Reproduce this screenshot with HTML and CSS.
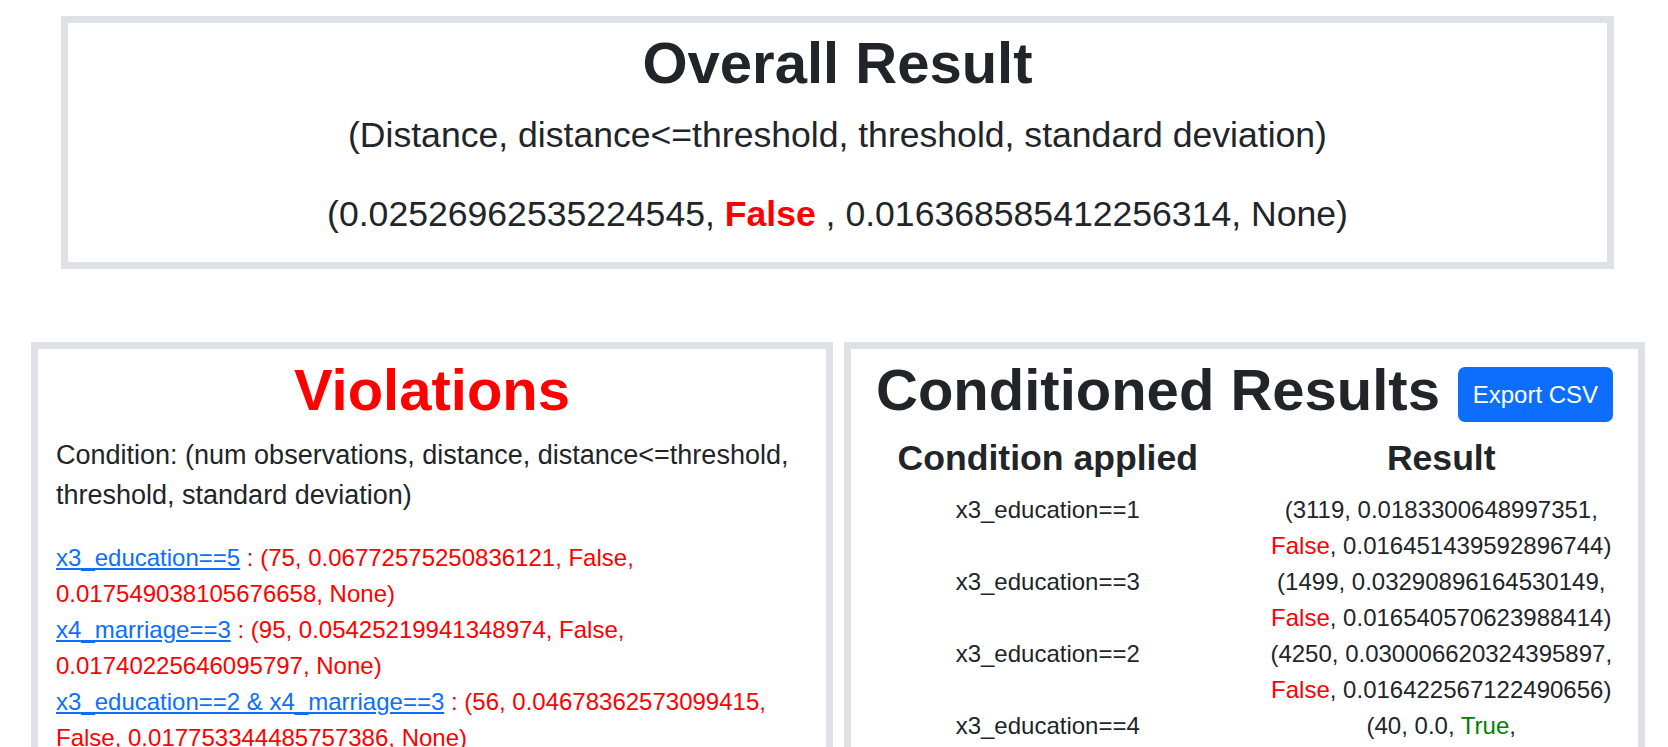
FILE: index.html
```html
<!DOCTYPE html>
<html lang="en">
<head>
<meta charset="utf-8">
<title>Results</title>
<link rel="stylesheet" href="styles.css">
</head>
<body>
<div class="page">
  <section class="overall">
    <h1 class="title">Overall Result</h1>
    <p class="legend">(Distance, distance&lt;=threshold, threshold, standard deviation)</p>
    <p class="values">(0.02526962535224545, <b class="bad">False</b> , 0.016368585412256314, None)</p>
  </section>

  <div class="panels">
    <section class="panel violations">
      <h2 class="title red">Violations</h2>
      <p class="cond">Condition: (num observations, distance, distance&lt;=threshold, threshold, standard deviation)</p>
      <div class="entries">
        <div class="entry"><a href="#">x3_education==5</a> : (75, 0.06772575250836121, False, 0.017549038105676658, None)</div>
        <div class="entry"><a href="#">x4_marriage==3</a> : (95, 0.05425219941348974, False, 0.01740225646095797, None)</div>
        <div class="entry"><a href="#">x3_education==2 &amp; x4_marriage==3</a> : (56, 0.04678362573099415, False, 0.017753344485757386, None)</div>
        <div class="entry"><a href="#">x3_education==5 &amp; x4_marriage==2</a> : (41, 0.07211538461538461, False, 0.01821490544315267, None)</div>
      </div>
    </section>

    <section class="panel conditioned">
      <div class="head-row">
        <h2 class="title">Conditioned Results</h2>
        <button class="btn" type="button">Export CSV</button>
      </div>
      <div class="grid">
        <div class="th">Condition applied</div>
        <div class="th">Result</div>

        <div class="td">x3_education==1</div>
        <div class="td">(3119, 0.0183300648997351, <span class="f">False</span>, 0.016451439592896744)</div>

        <div class="td">x3_education==3</div>
        <div class="td">(1499, 0.03290896164530149, <span class="f">False</span>, 0.016540570623988414)</div>

        <div class="td">x3_education==2</div>
        <div class="td">(4250, 0.030006620324395897, <span class="f">False</span>, 0.016422567122490656)</div>

        <div class="td">x3_education==4</div>
        <div class="td">(40, 0.0, <span class="t">True</span>, 0.0171432467185839)</div>

        <div class="td">x3_education==5</div>
        <div class="td">(75, 0.06772575250836121, <span class="f">False</span>, 0.017549038105676658)</div>
      </div>
    </section>
  </div>
</div>
</body>
</html>
```

FILE: styles.css
```css
html, body {
  margin: 0;
  padding: 0;
  background: #ffffff;
}

body {
  font-family: "Liberation Sans", Arial, sans-serif;
  color: #212529;
  font-size: 24px;
  line-height: 36px;
}

.page {
  padding-top: 16px;
  width: 1668px;
}

.overall {
  box-sizing: border-box;
  width: 1553px;
  margin-left: 61px;
  border: 7px solid #dee2e6;
  padding: 5px 0 26px;
  text-align: center;
}

.title {
  margin: 0;
  font-size: 58px;
  line-height: 70px;
  font-weight: 700;
}

.red {
  color: #ff0000;
}

.legend,
.values {
  margin: 0;
  font-size: 35.6px;
  line-height: 43px;
  font-weight: 400;
}

.legend {
  margin-top: 16px;
}

.values {
  margin-top: 36px;
}

.bad {
  color: #ff0000;
  font-weight: 700;
}

.panels {
  display: flex;
  gap: 11px;
  margin-top: 73px;
  padding-left: 31px;
}

.panel {
  box-sizing: border-box;
  border: 7px solid #dee2e6;
  padding-top: 6px;
}

.violations {
  width: 802px;
  padding-left: 18px;
  padding-right: 18px;
}

.violations .title {
  text-align: center;
}

.cond {
  margin: 10px 0 25px;
  font-size: 27px;
  line-height: 40px;
}

.entry {
  color: #ff0000;
}

.entry a {
  color: #0d6efd;
  text-decoration: underline;
}

.conditioned {
  width: 801px;
}

.head-row {
  display: flex;
  justify-content: center;
  align-items: center;
  gap: 18px;
}

.btn {
  box-sizing: border-box;
  width: 155px;
  height: 55px;
  margin-top: 9px;
  padding: 0;
  border: none;
  border-radius: 7px;
  background: #0d6efd;
  color: #ffffff;
  font-family: "Liberation Sans", Arial, sans-serif;
  font-size: 24px;
  line-height: 36px;
}

.grid {
  display: grid;
  grid-template-columns: 1fr 1fr;
  align-items: start;
  margin-top: 12px;
  text-align: center;
}

.th {
  font-size: 35.6px;
  line-height: 42px;
  font-weight: 700;
  padding-bottom: 13px;
}

.td {
  padding: 0 16px;
  min-height: 72px;
}

.f {
  color: #ff0000;
}

.t {
  color: #008000;
}
```
